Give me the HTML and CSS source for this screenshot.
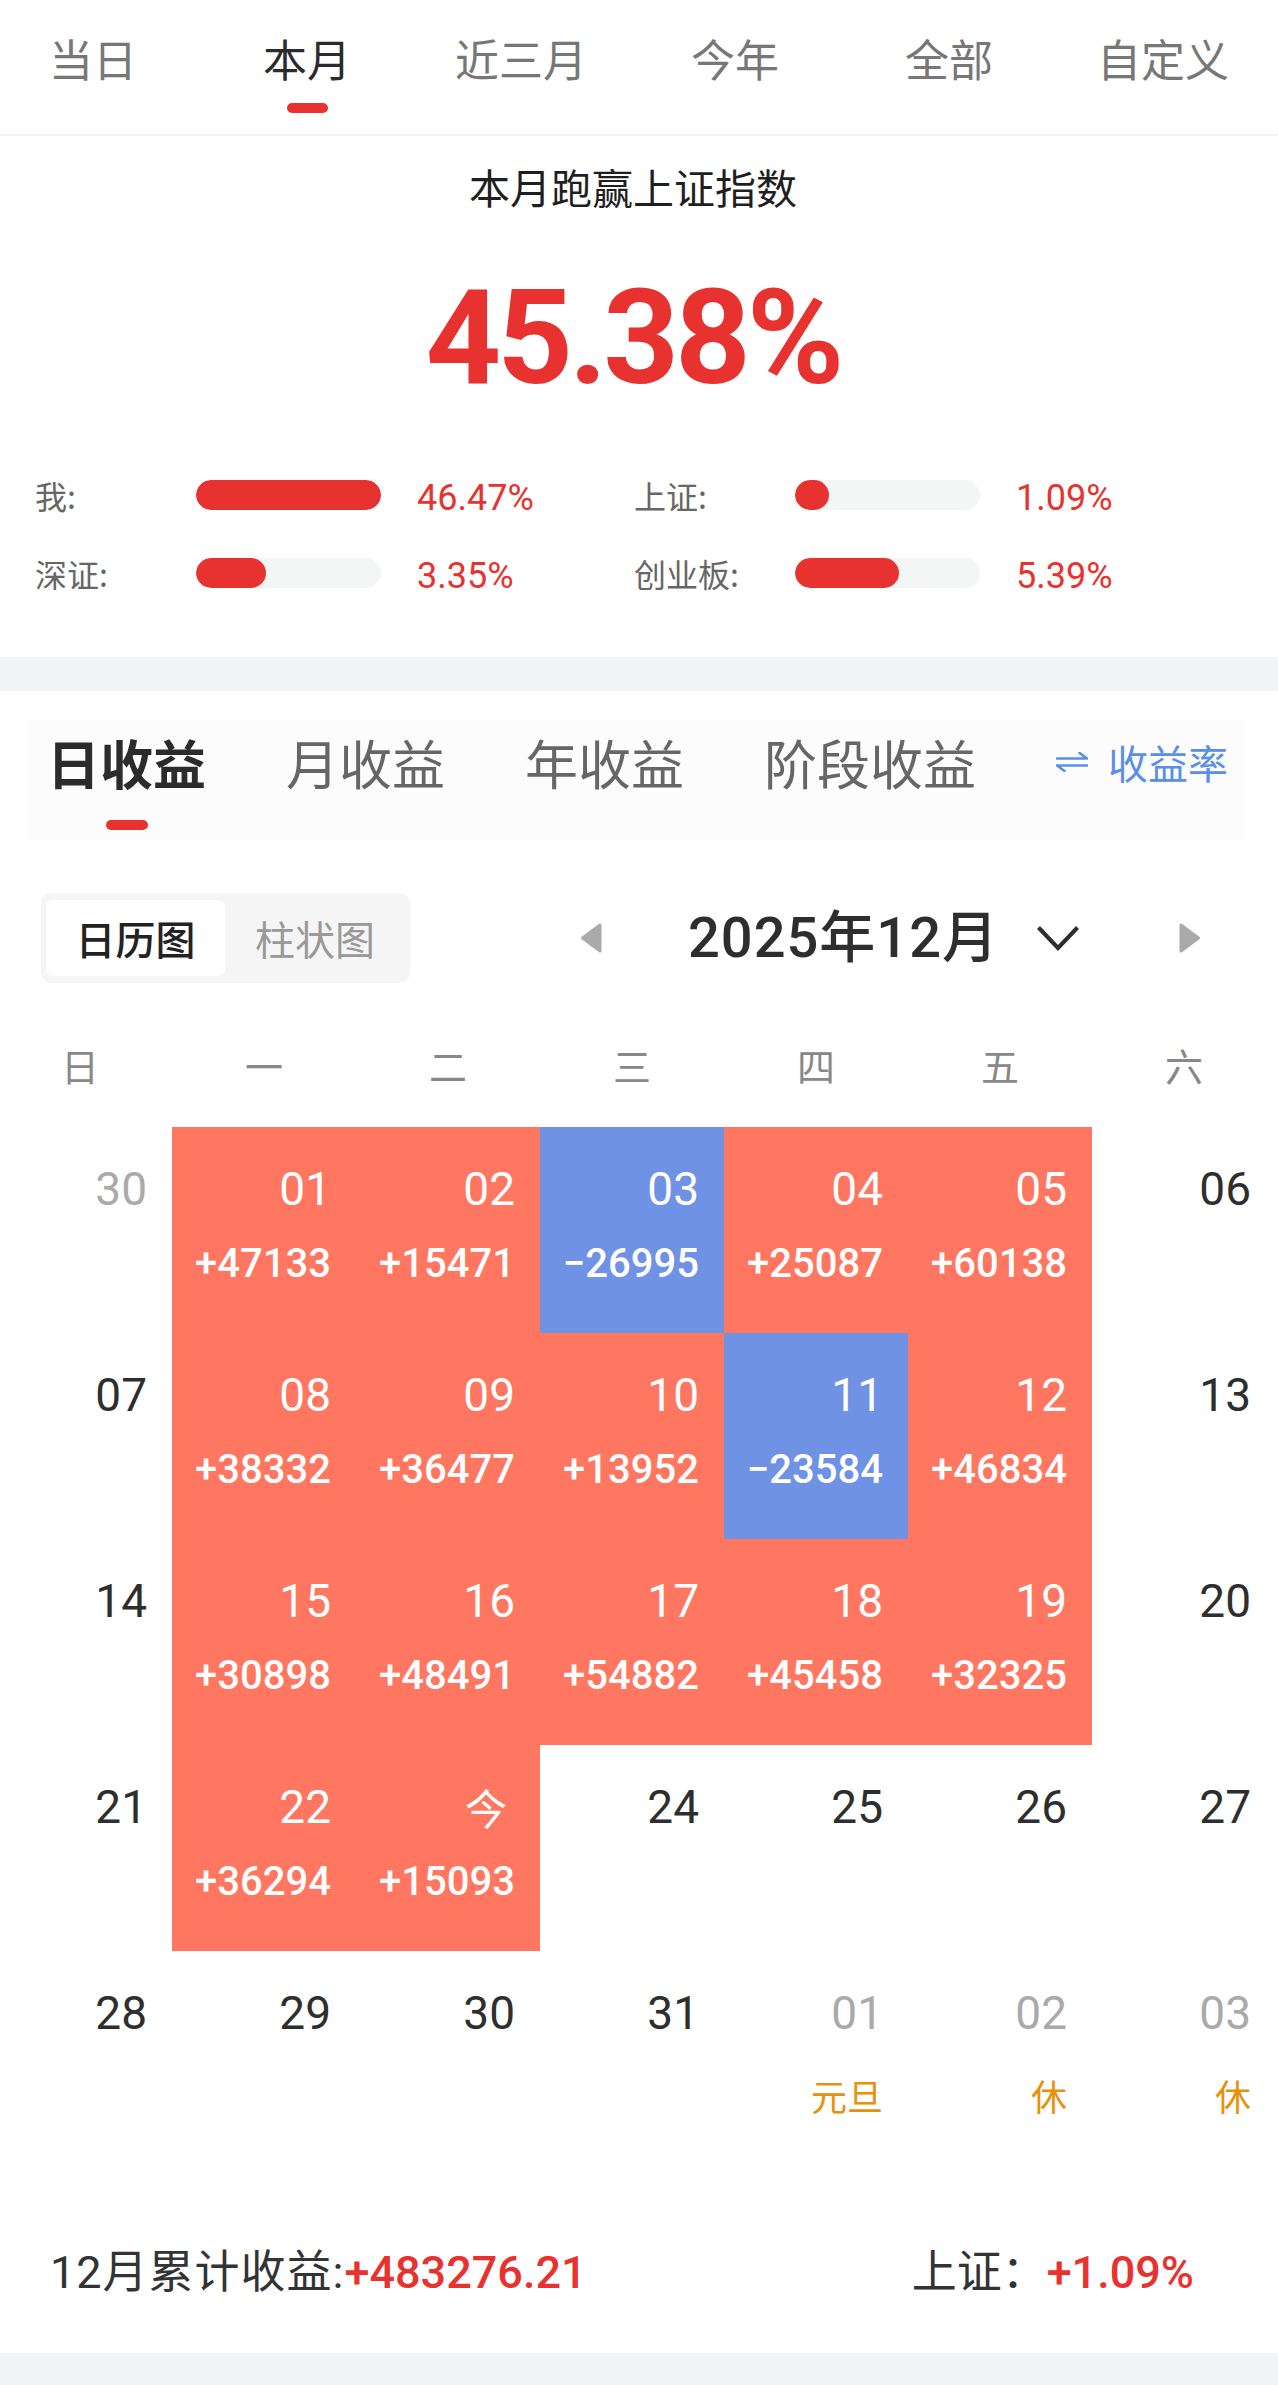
FILE: index.html
```html
<!DOCTYPE html>
<html lang="zh-CN">
<head>
<meta charset="utf-8">
<title>收益日历</title>
<link rel="stylesheet" href="styles.css">
</head>
<body>
<header class="period-bar">
  <div class="period-track">
    <div class="ptab"><span class="ptab-label">当日</span></div>
    <div class="ptab active"><span class="ptab-label">本月</span><i class="ptab-bar"></i></div>
    <div class="ptab"><span class="ptab-label">近三月</span></div>
    <div class="ptab"><span class="ptab-label">今年</span></div>
    <div class="ptab"><span class="ptab-label">全部</span></div>
    <div class="ptab"><span class="ptab-label">自定义</span></div>
  </div>
</header>

<section class="beat">
  <h2 class="beat-title">本月跑赢上证指数</h2>
  <div class="beat-value">45.38%</div>
  <div class="compare">
    <div class="cmp">
      <span class="cmp-label">我:</span>
      <span class="track"><span class="fill" style="width:185px"></span></span>
      <span class="cmp-pct">46.47%</span>
    </div>
    <div class="cmp">
      <span class="cmp-label">上证:</span>
      <span class="track"><span class="fill" style="width:34px"></span></span>
      <span class="cmp-pct">1.09%</span>
    </div>
    <div class="cmp">
      <span class="cmp-label">深证:</span>
      <span class="track"><span class="fill" style="width:70px"></span></span>
      <span class="cmp-pct">3.35%</span>
    </div>
    <div class="cmp">
      <span class="cmp-label">创业板:</span>
      <span class="track"><span class="fill" style="width:104px"></span></span>
      <span class="cmp-pct">5.39%</span>
    </div>
  </div>
</section>

<div class="band"></div>

<section class="income">
  <div class="itabs">
    <div class="itab active"><span class="itab-label">日收益</span><i class="itab-bar"></i></div>
    <div class="itab"><span class="itab-label">月收益</span><i class="itab-bar"></i></div>
    <div class="itab"><span class="itab-label">年收益</span><i class="itab-bar"></i></div>
    <div class="itab"><span class="itab-label">阶段收益</span><i class="itab-bar"></i></div>
    <div class="rate-switch">
      <svg class="swap" viewBox="0 0 32 20" width="32" height="20"><path d="M1 6.5H31L23.5 1M31 13.5H1L8.5 19" fill="none" stroke="#5b8ee6" stroke-width="2.6" stroke-linecap="round" stroke-linejoin="round"/></svg>
      <span>收益率</span>
    </div>
  </div>

  <div class="toolbar">
    <div class="seg">
      <span class="seg-item on">日历图</span>
      <span class="seg-item">柱状图</span>
    </div>
    <div class="month-nav">
      <svg class="tri" viewBox="0 0 22 30" width="22" height="30"><path d="M20 2L2.5 15L20 28Z" fill="#aaa" stroke="#aaa" stroke-width="3" stroke-linejoin="round"/></svg>
      <span class="month-title">2025年12月</span>
      <svg class="chev" viewBox="0 0 44 26" width="44" height="26"><path d="M2.5 2.5L22 23L41.5 2.5" fill="none" stroke="#2e2e2e" stroke-width="4" stroke-linejoin="miter"/></svg>
      <svg class="tri" viewBox="0 0 22 30" width="22" height="30"><path d="M2 2L19.5 15L2 28Z" fill="#aaa" stroke="#aaa" stroke-width="3" stroke-linejoin="round"/></svg>
    </div>
  </div>

  <div class="weekdays">
    <span>日</span><span>一</span><span>二</span><span>三</span><span>四</span><span>五</span><span>六</span>
  </div>

  <div class="cal">
    <div class="day other"><span class="num">30</span></div>
    <div class="day up"><span class="num">01</span><span class="amt">+47133</span></div>
    <div class="day up"><span class="num">02</span><span class="amt">+15471</span></div>
    <div class="day down"><span class="num">03</span><span class="amt">−26995</span></div>
    <div class="day up"><span class="num">04</span><span class="amt">+25087</span></div>
    <div class="day up"><span class="num">05</span><span class="amt">+60138</span></div>
    <div class="day"><span class="num">06</span></div>

    <div class="day"><span class="num">07</span></div>
    <div class="day up"><span class="num">08</span><span class="amt">+38332</span></div>
    <div class="day up"><span class="num">09</span><span class="amt">+36477</span></div>
    <div class="day up"><span class="num">10</span><span class="amt">+13952</span></div>
    <div class="day down"><span class="num">11</span><span class="amt">−23584</span></div>
    <div class="day up"><span class="num">12</span><span class="amt">+46834</span></div>
    <div class="day"><span class="num">13</span></div>

    <div class="day"><span class="num">14</span></div>
    <div class="day up"><span class="num">15</span><span class="amt">+30898</span></div>
    <div class="day up"><span class="num">16</span><span class="amt">+48491</span></div>
    <div class="day up"><span class="num">17</span><span class="amt">+54882</span></div>
    <div class="day up"><span class="num">18</span><span class="amt">+45458</span></div>
    <div class="day up"><span class="num">19</span><span class="amt">+32325</span></div>
    <div class="day"><span class="num">20</span></div>

    <div class="day"><span class="num">21</span></div>
    <div class="day up"><span class="num">22</span><span class="amt">+36294</span></div>
    <div class="day up"><span class="num today">今</span><span class="amt">+15093</span></div>
    <div class="day"><span class="num">24</span></div>
    <div class="day"><span class="num">25</span></div>
    <div class="day"><span class="num">26</span></div>
    <div class="day"><span class="num">27</span></div>

    <div class="day"><span class="num">28</span></div>
    <div class="day"><span class="num">29</span></div>
    <div class="day"><span class="num">30</span></div>
    <div class="day"><span class="num">31</span></div>
    <div class="day other"><span class="num">01</span><span class="hol">元旦</span></div>
    <div class="day other"><span class="num">02</span><span class="hol">休</span></div>
    <div class="day other"><span class="num">03</span><span class="hol">休</span></div>
  </div>

  <div class="summary">
    <div class="sum-left"><span class="sum-label">12月累计收益:</span><span class="red">+483276.21</span></div>
    <div class="sum-right">上证：<span class="red">+1.09%</span></div>
  </div>
</section>

<div class="band band-bottom"></div>
</body>
</html>
```

FILE: styles.css
```css
* {
  box-sizing: border-box;
  margin: 0;
  padding: 0;
}

html,
body {
  background: #fff;
}

body {
  width: 1278px;
  overflow-x: hidden;
  font-family: "Noto Sans CJK SC", sans-serif;
  color: #333;
}

/* ---------- period tabs ---------- */
.period-bar {
  height: 136px;
  border-bottom: 2px solid #f1f1f1;
  overflow: hidden;
}

.period-track {
  display: flex;
  margin-left: -14px;
}

.ptab {
  flex: none;
  width: 214px;
  display: flex;
  flex-direction: column;
  align-items: center;
  padding-top: 36px;
}

.ptab-label {
  font-size: 44px;
  line-height: 44px;
  color: #777;
  white-space: nowrap;
}

.ptab.active .ptab-label {
  color: #2b2b2b;
}

.ptab-bar {
  display: block;
  width: 41px;
  height: 10px;
  margin-top: 23px;
  border-radius: 5px;
  background: #e8322f;
}

/* ---------- beat section ---------- */
.beat {
  padding: 30px 12px 64px 0;
  text-align: center;
}

.beat-title {
  font-size: 41px;
  line-height: 41px;
  font-weight: 400;
  color: #1f1f1f;
}

.beat-value {
  margin-top: 65px;
  font-family: Roboto, sans-serif;
  font-weight: 700;
  font-size: 132px;
  line-height: 132px;
  letter-spacing: -4px;
  color: #e8322f;
}

.compare {
  display: grid;
  grid-template-columns: 599px 599px;
  row-gap: 38px;
  margin-top: 71px;
  padding-left: 35px;
  text-align: left;
}

.cmp {
  display: flex;
  align-items: center;
  height: 40px;
}

.cmp-label {
  flex: none;
  width: 161px;
  font-size: 32px;
  line-height: 40px;
  color: #666;
}

.track {
  flex: none;
  display: flex;
  width: 185px;
  height: 30px;
  border-radius: 15px;
  background: #f4f5f5;
  overflow: hidden;
}

.fill {
  display: block;
  height: 100%;
  border-radius: 15px;
  background: #e8322f;
}

.cmp-pct {
  margin-left: 36px;
  padding-top: 6px;
  font-family: Roboto, sans-serif;
  font-size: 36px;
  line-height: 40px;
  color: #e8322f;
}

.band {
  height: 34px;
  background: #f3f4f7;
}

.band-bottom {
  margin-top: 58px;
  height: 33px;
}

/* ---------- income tabs ---------- */
.itabs {
  display: flex;
  align-items: flex-start;
  gap: 80px;
  margin: 29px 35px 0 30px;
  padding: 15px 20px 10px 17px;
  background: #fcfcfc;
}

.itab {
  flex: none;
  display: flex;
  flex-direction: column;
  align-items: center;
}

.itab-label {
  font-size: 53px;
  line-height: 54px;
  color: #666;
  white-space: nowrap;
}

.itab.active .itab-label {
  font-weight: 700;
  color: #2b2b2b;
}

.itab-bar {
  display: block;
  width: 42px;
  height: 10px;
  margin-top: 31px;
  border-radius: 5px;
}

.itab.active .itab-bar {
  background: #e8322f;
}

.rate-switch {
  flex: none;
  margin-left: auto;
  display: flex;
  align-items: center;
  gap: 20px;
  height: 54px;
  font-size: 40px;
  color: #5b8ee6;
  white-space: nowrap;
}

.swap {
  display: block;
  flex: none;
}

/* ---------- toolbar ---------- */
.toolbar {
  display: flex;
  align-items: center;
  height: 90px;
  margin-top: 53px;
}

.seg {
  flex: none;
  display: flex;
  margin-left: 41px;
  padding: 7px 5px;
  background: #f5f5f5;
  border-radius: 10px;
}

.seg-item {
  width: 180px;
  height: 76px;
  line-height: 76px;
  text-align: center;
  font-size: 40px;
  color: #999;
  border-radius: 7px;
  white-space: nowrap;
}

.seg-item.on {
  width: 179px;
  background: #fff;
  color: #222;
  font-weight: 500;
}

.month-nav {
  flex: none;
  display: flex;
  align-items: center;
  margin-left: auto;
  margin-right: 77px;
}

.tri {
  display: block;
  flex: none;
}

.month-title {
  margin-left: 86px;
  font-family: Roboto, "Noto Sans CJK SC", sans-serif;
  font-size: 56px;
  line-height: 56px;
  font-weight: 500;
  letter-spacing: 1px;
  color: #2e2e2e;
  white-space: nowrap;
}

.chev {
  display: block;
  flex: none;
  margin-left: 37px;
  margin-right: 99px;
}

/* ---------- calendar ---------- */
.weekdays {
  display: grid;
  grid-template-columns: repeat(7, 184px);
  margin: 63px 0 0 -12px;
  font-size: 38px;
  line-height: 38px;
  color: #888;
  text-align: center;
}

.cal {
  display: grid;
  grid-template-columns: repeat(7, 184px);
  grid-auto-rows: 206px;
  margin: 43px 0 0 -12px;
}

.day {
  display: flex;
  flex-direction: column;
  align-items: flex-end;
  padding: 39px 25px 0 0;
  color: #2e2e2e;
}

.day.up {
  background: #ff7661;
  color: #fff;
}

.day.down {
  background: #6f92e4;
  color: #fff;
}

.day.other {
  color: #aaa;
}

.num {
  font-family: Roboto, sans-serif;
  font-size: 46px;
  line-height: 46px;
}

.num.today {
  font-family: "Noto Sans CJK SC", sans-serif;
  font-size: 42px;
  margin-right: 8px;
}

.amt {
  margin-top: 32px;
  font-family: Roboto, sans-serif;
  font-size: 40px;
  line-height: 40px;
  font-weight: 500;
}

.hol {
  margin-top: 41px;
  font-size: 36px;
  line-height: 36px;
  color: #e8900c;
}

/* ---------- summary ---------- */
.summary {
  display: flex;
  justify-content: space-between;
  margin-top: 93px;
  padding: 0 84px 0 50px;
  font-family: Roboto, "Noto Sans CJK SC", sans-serif;
  font-size: 45px;
  line-height: 45px;
  color: #333;
  white-space: nowrap;
}

.sum-label {
  letter-spacing: 1px;
}

.red {
  color: #e8322f;
  font-weight: 500;
}
```
